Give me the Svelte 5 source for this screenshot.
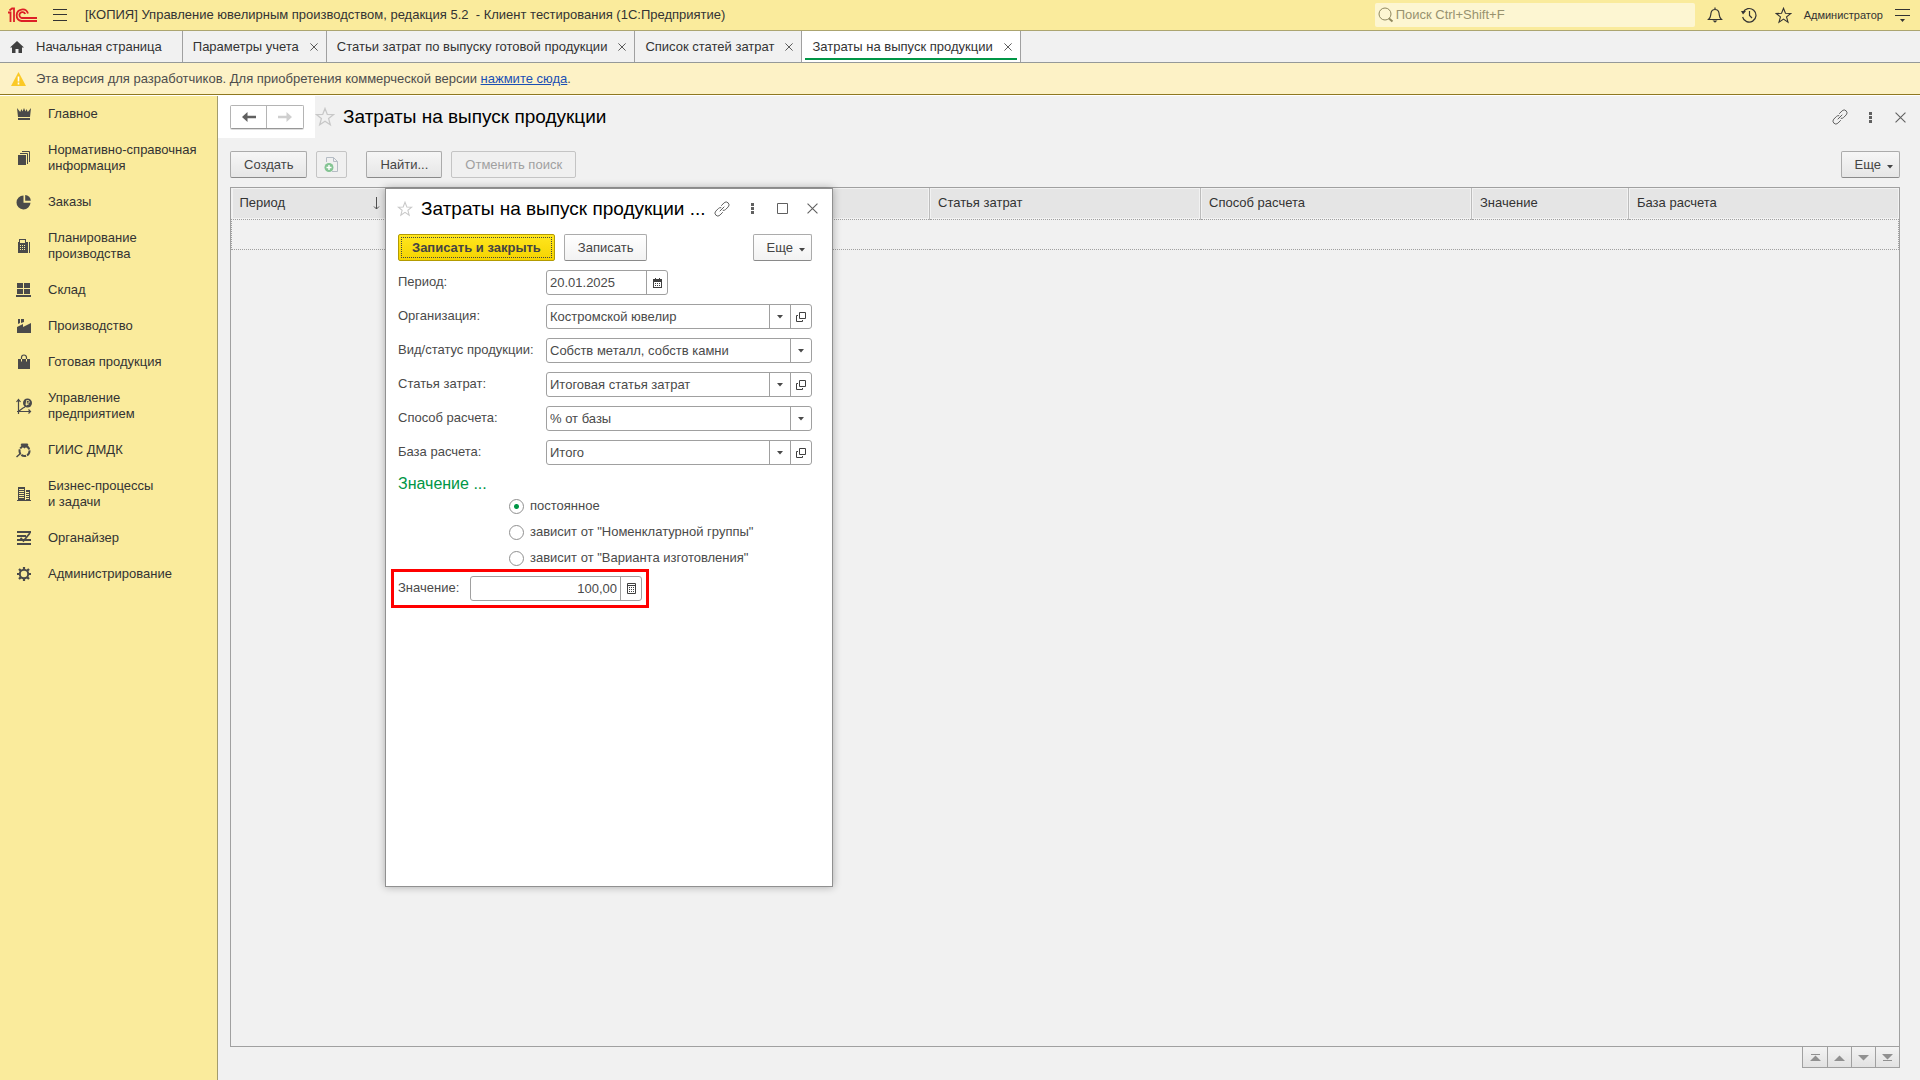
<script>
  const tabs = [
    { title: 'Параметры учета' },
    { title: 'Статьи затрат по выпуску готовой продукции' },
    { title: 'Список статей затрат' },
    { title: 'Затраты на выпуск продукции', active: true }
  ];

  const sections = [
    { icon: 'crown', lines: ['Главное'] },
    { icon: 'docs', lines: ['Нормативно-справочная', 'информация'] },
    { icon: 'pie', lines: ['Заказы'] },
    { icon: 'calc', lines: ['Планирование', 'производства'] },
    { icon: 'stock', lines: ['Склад'] },
    { icon: 'factory', lines: ['Производство'] },
    { icon: 'bag', lines: ['Готовая продукция'] },
    { icon: 'chart', lines: ['Управление', 'предприятием'] },
    { icon: 'ring', lines: ['ГИИС ДМДК'] },
    { icon: 'building', lines: ['Бизнес-процессы', 'и задачи'] },
    { icon: 'organizer', lines: ['Органайзер'] },
    { icon: 'gear', lines: ['Администрирование'] }
  ];

  const columns = ['Статья затрат', 'Способ расчета', 'Значение', 'База расчета'];

  const fields = [
    { id: 'org', label: 'Организация:', value: 'Костромской ювелир', open: true },
    { id: 'kind', label: 'Вид/статус продукции:', value: 'Собств металл, собств камни' },
    { id: 'item', label: 'Статья затрат:', value: 'Итоговая статья затрат', open: true },
    { id: 'method', label: 'Способ расчета:', value: '% от базы' },
    { id: 'base', label: 'База расчета:', value: 'Итого', open: true }
  ];

  const modes = ['постоянное', 'зависит от "Номенклатурной группы"', 'зависит от "Варианта изготовления"'];

  let mode = $state('постоянное');
  let period = $state('20.01.2025');
  let amount = $state('100,00');
</script>

{#snippet star(size)}
  <svg width={size} height={size} viewBox="0 0 20 20" fill="none" stroke="currentColor" stroke-width="1.3">
    <path d="M10 1.5l2.3 5.9 6.2.3-4.9 3.9 1.7 6.2-5.3-3.5-5.3 3.5 1.7-6.2L1.5 7.7l6.2-.3z" />
  </svg>
{/snippet}

{#snippet link()}
  <svg width="16" height="16" viewBox="0 0 16 16" fill="none" stroke="currentColor" stroke-linecap="round">
    <path d="M7.5 4.5l2.600-2.700a2.900 2.900 0 0 1 4.100 4.100l-2.700 2.700a2.900 2.900 0 0 1-2.300.8" />
    <path d="M8.5 11.5l-2.600 2.700a2.900 2.900 0 0 1-4.100-4.100l2.700-2.700a2.900 2.900 0 0 1 2.300-.8" />
    <path d="M6 10l4-4" />
  </svg>
{/snippet}

{#snippet dots()}
  <svg width="3" height="11" viewBox="0 0 3 11" fill="currentColor">
    <path d="M0 0h3v3H0zM0 4h3v3H0zM0 8h3v3H0z" />
  </svg>
{/snippet}

{#snippet cross(size)}
  <svg width={size} height={size} viewBox="0 0 10 10" fill="none" stroke="currentColor">
    <path d="M.5.5l9 9M9.5.5l-9 9" />
  </svg>
{/snippet}

{#snippet arrow()}
  <svg class="arrow" width="6" height="4" viewBox="0 0 6 4" fill="currentColor"><path d="M0 0h6L3 3.500z" /></svg>
{/snippet}

{#snippet sectionIcon(name)}
  <svg width="16" height="16" viewBox="0 0 16 16" fill="#4a4a4a">
    {#if name === 'crown'}
      <path d="M1 2l3.200 4L5.500 3 6.500 5.500 8 2l1.500 3.500 1-2.500L11.800 6 15 2l-1 9H2zM2 12h12v2H2z" />
    {:else if name === 'docs'}
      <path d="M2 5h8v10H2z" />
      <path d="M4 3.500h7.500V14M6 1.500h7.500V12" fill="none" stroke="#4a4a4a" />
    {:else if name === 'pie'}
      <path d="M7.500 1.500v7.300h7A7 7 0 1 1 7.500 1.500z" />
      <path d="M9.200 1a6 6 0 0 1 5.600 5.800H9.200z" />
    {:else if name === 'calc'}
      <path fill-rule="evenodd" d="M3 1h7v3h2v11H2V4h1zm1 1v3h5V2zM4 7v1h1V7zm2 0v1h1V7zm2 0v1h1V7zM4 9v1h1V9zm2 0v1h1V9zm2 0v1h1V9zm-4 2v1h1v-1zm2 0v1h1v-1zm2 0v1h1v-1z" />
      <path d="M13 4h1v11h-1z" />
    {:else if name === 'stock'}
      <path d="M1 1h6v5H1zM8 1h6v5H8zM1 7h6v5H1zM8 7h6v5H8zM0 13h15v2H0z" />
    {:else if name === 'factory'}
      <path d="M1 15V9l6-3v3l8-4v10zM2 1h2v4l-2 1zM5 1h3v3L5 5z" />
    {:else if name === 'bag'}
      <path d="M2 5h12v10H2z" />
      <path d="M5.500 7V3.500a2.500 2.500 0 0 1 5 0V7" fill="none" stroke="#4a4a4a" stroke-width="1.2" />
      <path d="M5.500 5v2.500M10.500 5v2.500" stroke="#faeb9c" />
    {:else if name === 'chart'}
      <path d="M2.500 16V2M1 13.500h13M.5 4l2-2.500 2 2.500M12.500 11.500l2 2-2 2M3 13l4-3 2-1" fill="none" stroke="#4a4a4a" stroke-width="1.2" />
      <circle cx="11.5" cy="5" r="4.5" />
      <path d="M10.500 7.500v-5h1.500a1.300 1.300 0 0 1 0 2.700H9.500M9.500 6.500h3" fill="none" stroke="#faeb9c" stroke-width=".8" />
    {:else if name === 'ring'}
      <circle cx="8.5" cy="9" r="5" fill="none" stroke="#4a4a4a" stroke-width="2" stroke-dasharray="5 1" />
      <path d="M5.500 1.500h6l1 1.500-4 3.500L4.500 3zM0 14.500l4-3.500 1 1-4 3.500z" />
    {:else if name === 'building'}
      <path d="M2 1h7v14H2zM10 4h4v11h-4zM1 14h14v1H1z" />
      <path d="M3 3.500h5M3 5.500h5M3 7.500h5M3 9.500h5M3 11.500h5M10 6.500h3M10 8.500h3M10 10.500h3M10 12.500h3" stroke="#faeb9c" />
    {:else if name === 'organizer'}
      <path d="M1 1h14v2H1zM1 5h9v2H1zM1 9h14v2H1zM1 13h14v2H1z" />
      <path d="M4.500 8l3 3L14 3" fill="none" stroke="#4a4a4a" stroke-width="1.8" />
    {:else}
      <circle cx="8" cy="8" r="4.2" fill="none" stroke="#4a4a4a" stroke-width="2" />
      <path d="M8 1v2.500M8 12.500V15M1 8h2.500M12.500 8H15M3 3l1.900 1.900M11.100 11.100L13 13M13 3l-1.900 1.900M4.900 11.100L3 13" stroke="#4a4a4a" stroke-width="2.2" />
    {/if}
  </svg>
{/snippet}

<div class="app">
  <header class="titlebar">
    <svg class="logo" width="30" height="16" viewBox="0 0 30 16" fill="none" stroke="#dd1f26" stroke-width="1.8">
      <path d="M0 5.500h2.500V15M1.500 3.500L4 1.500h2V15" />
      <path d="M20 6.500a5.800 5.800 0 1 0-6.500 7.500H29" />
      <path d="M17.200 7a3 3 0 1 0-3.400 4H29" />
    </svg>
    <button class="plain menu" aria-label="Меню">
      <svg width="14" height="12" viewBox="0 0 14 12" stroke="currentColor"><path d="M0 .5h14M0 5.500h14M0 11.500h14" /></svg>
    </button>
    <span class="app-title">[КОПИЯ] Управление ювелирным производством, редакция 5.2 &nbsp;- Клиент тестирования (1С:Предприятие)</span>
    <label class="search">
      <svg width="16" height="16" viewBox="0 0 16 16" fill="none" stroke="#8f885f">
        <circle cx="7" cy="7" r="6" />
        <path d="M11 11.500l3.500 3" stroke-width="2" />
      </svg>
      <input type="text" placeholder="Поиск Ctrl+Shift+F" aria-label="Поиск" />
    </label>
    <div class="title-tools">
      <button class="plain" aria-label="Уведомления">
        <svg width="16" height="16" viewBox="0 0 16 16" fill="none" stroke="currentColor" stroke-width="1.2">
          <path d="M1.500 12.500h13c-2.500-2-2-3.500-2.500-6.500-.4-2.400-1.500-3.500-4-3.500S4.400 3.600 4 6c-.5 3 0 4.500-2.500 6.500zM8 .5v2" />
          <path d="M5.500 13.500h5L8 15.800z" fill="currentColor" stroke="none" />
        </svg>
      </button>
      <button class="plain" aria-label="История">
        <svg width="16" height="16" viewBox="0 0 16 16" fill="none" stroke="currentColor" stroke-width="1.2">
          <path d="M2 5.500a6.800 6.800 0 1 1-.4 4.500M8.500 4v4.500l2.500 2.500" />
          <path d="M0 4h5L2 7.500z" fill="currentColor" stroke="none" />
        </svg>
      </button>
      <button class="plain" aria-label="Избранное">{@render star(17)}</button>
    </div>
    <a class="user" href="#user">Администратор</a>
    <button class="plain" aria-label="Настройки">
      <svg width="15" height="13" viewBox="0 0 15 13" stroke="currentColor">
        <path d="M0 .5h15M0 6.500h15" />
        <path d="M5 10h5l-2.500 3z" fill="currentColor" stroke="none" />
      </svg>
    </button>
  </header>

  <nav class="tabs">
    <a class="tab home" href="#home">
      <svg width="14" height="12" viewBox="0 0 14 12" fill="#404040"><path d="M7 0l7 6.500h-2V12H8.500V8h-3v4H2V6.500H0z" /></svg>
      Начальная страница
    </a>
    {#each tabs as tab}
      <div class="tab" class:active={tab.active}>
        <a href="#tab">{tab.title}</a>
        <button class="plain" aria-label="Закрыть">{@render cross(8)}</button>
      </div>
    {/each}
  </nav>

  <div class="notice">
    <svg width="15" height="14" viewBox="0 0 15 14">
      <path d="M7.500 0L15 14H0z" fill="#fbc926" />
      <path d="M7.500 4.500v5M7.500 10.500v2" stroke="#fff" stroke-width="1.6" />
    </svg>
    <span>Эта версия для разработчиков. Для приобретения коммерческой версии <a href="#buy">нажмите сюда</a>.</span>
  </div>

  <div class="body">
    <aside class="sidebar">
      {#each sections as section}
        <a class="section" href="#section">
          {@render sectionIcon(section.icon)}
          <span>
            {#each section.lines as line}<span class="line">{line}</span>{/each}
          </span>
        </a>
      {/each}
    </aside>

    <main class="page">
      <div class="page-head">
        <div class="nav-box">
          <div class="nav-buttons">
            <button aria-label="Назад">
              <svg width="14" height="10" viewBox="0 0 14 10" fill="#606060"><path d="M0 5l5.500-5v3.700H14v2.600H5.500V10z" /></svg>
            </button>
            <button aria-label="Вперед" disabled>
              <svg width="14" height="10" viewBox="0 0 14 10" fill="#cfcfcf"><path d="M14 5L8.500 0v3.700H0v2.600h8.500V10z" /></svg>
            </button>
          </div>
        </div>
        <button class="plain fav" aria-label="В избранное">{@render star(20)}</button>
        <h1>Затраты на выпуск продукции</h1>
        <div class="window-tools">
          <button class="plain" aria-label="Ссылка">{@render link()}</button>
          <button class="plain" aria-label="Действия">{@render dots()}</button>
          <button class="plain" aria-label="Закрыть">{@render cross(11)}</button>
        </div>
      </div>

      <div class="toolbar">
        <button class="btn">Создать</button>
        <button class="btn copy" aria-label="Скопировать" disabled>
          <svg width="15" height="17" viewBox="0 0 15 17" fill="none">
            <path d="M2.500 6V1.500h7l4 4v10H8M9.500 1.500v4h4" stroke="#b5bcc4" />
            <circle cx="5" cy="11.5" r="4.5" fill="#84c493" />
            <path d="M5 9v5M2.500 11.500h5" stroke="#fff" stroke-width="1.4" />
          </svg>
        </button>
        <button class="btn find">Найти...</button>
        <button class="btn" disabled>Отменить поиск</button>
        <button class="btn more">Еще {@render arrow()}</button>
      </div>

      <div class="list">
        <table>
          <colgroup>
            <col class="c-period" /><col class="c-hidden" /><col class="c-item" /><col class="c-method" /><col class="c-value" /><col />
          </colgroup>
          <thead>
            <tr>
              <th>
                <span class="sorted">Период
                  <svg width="7" height="13" viewBox="0 0 7 13" fill="none" stroke="#505050"><path d="M3.500 0v12M1 9.500l2.500 2.500L6 9.500" /></svg>
                </span>
              </th>
              <th aria-label="Организация"></th>
              {#each columns as column}<th>{column}</th>{/each}
            </tr>
          </thead>
          <tbody>
            <tr><td colspan="6"></td></tr>
          </tbody>
        </table>
      </div>

      <div class="pager">
        <button aria-label="В начало"><svg width="11" height="7" viewBox="0 0 11 7"><path d="M1 0h9v1H1zM5.500 1.500L11 7H0z" /></svg></button>
        <button aria-label="Вверх"><svg width="11" height="7" viewBox="0 0 11 7"><path d="M5.500 1.500L11 7H0z" /></svg></button>
        <button aria-label="Вниз"><svg width="11" height="7" viewBox="0 0 11 7"><path d="M0 1h11L5.500 6.500z" /></svg></button>
        <button aria-label="В конец"><svg width="11" height="7" viewBox="0 0 11 7"><path d="M0 0h11L5.500 5.500zM1 6h9v1H1z" /></svg></button>
      </div>

      <div class="dialog" role="dialog" aria-labelledby="dialog-title">
        <div class="dialog-head">
          <button class="plain fav" aria-label="В избранное">{@render star(16)}</button>
          <h2 id="dialog-title">Затраты на выпуск продукции ...</h2>
          <div class="window-tools">
            <button class="plain" aria-label="Ссылка">{@render link()}</button>
            <button class="plain" aria-label="Действия">{@render dots()}</button>
            <button class="plain" aria-label="Развернуть">
              <svg width="11" height="11" viewBox="0 0 11 11" fill="none" stroke="currentColor"><path d="M.5.5h10v10H.5z" /></svg>
            </button>
            <button class="plain" aria-label="Закрыть">{@render cross(11)}</button>
          </div>
        </div>

        <div class="dialog-bar">
          <button class="btn primary">Записать и закрыть</button>
          <button class="btn">Записать</button>
          <button class="btn more">Еще {@render arrow()}</button>
        </div>

        <div class="form">
          <div class="row">
            <label for="period">Период:</label>
            <div class="field date">
              <input id="period" type="text" bind:value={period} />
              <button aria-label="Выбрать дату">
                <svg width="9" height="10" viewBox="0 0 9 10" fill="#404040">
                  <path fill-rule="evenodd" d="M0 1h2V0h1v1h3V0h1v1h2v9H0zm1 3v5h7V4z" />
                  <path d="M2 5h1v1H2zM4 5h1v1H4zM6 5h1v1H6zM2 7h1v1H2zM4 7h1v1H4zM6 7h1v1H6z" />
                </svg>
              </button>
            </div>
          </div>

          {#each fields as field}
            <div class="row">
              <label for={field.id}>{field.label}</label>
              <div class="field">
                <div class="picker">
                  <select id={field.id}><option>{field.value}</option></select>
                  <span class="drop">{@render arrow()}</span>
                </div>
                {#if field.open}
                  <button aria-label="Открыть">
                    <svg width="10" height="10" viewBox="0 0 10 10" fill="none" stroke="#404040"><path d="M3.500.5h6v6h-6zM2 3.500H.5v6h6V8" /></svg>
                  </button>
                {/if}
              </div>
            </div>
          {/each}
        </div>

        <fieldset>
          <legend>Значение ...</legend>
          {#each modes as item}
            <label class="radio">
              <input type="radio" name="mode" value={item} bind:group={mode} />
              {item}
            </label>
          {/each}
        </fieldset>

        <div class="amount">
          <label for="amount">Значение:</label>
          <div class="field">
            <input id="amount" type="text" bind:value={amount} />
            <button aria-label="Калькулятор">
              <svg width="9" height="11" viewBox="0 0 9 11" fill="none" stroke="#404040">
                <path d="M.5.5h8v10h-8zM1 2.500h7" />
                <path d="M2 4.500h5M2 6.500h5M2 8.500h5" stroke-dasharray="1 1" />
              </svg>
            </button>
          </div>
        </div>
      </div>
    </main>
  </div>
</div>

<style>
  :global(body) {
    margin: 0;
  }

  .app {
    display: flex;
    flex-direction: column;
    min-height: 100vh;
    background: #f1f1f1;
    color: #333;
    font: 13px/16px "Liberation Sans", Arial, sans-serif;
  }

  .app * {
    box-sizing: border-box;
  }

  svg {
    display: block;
    flex: none;
  }

  button,
  input,
  select {
    font: inherit;
    color: inherit;
    margin: 0;
  }

  a {
    color: inherit;
    text-decoration: none;
  }

  .plain {
    display: flex;
    align-items: center;
    justify-content: center;
    padding: 0;
    border: 0;
    background: none;
  }

  /* Title bar */
  .titlebar {
    display: flex;
    align-items: center;
    height: 31px;
    padding: 0 10px 0 8px;
    background: #faeb9c;
    border-bottom: 1px solid #aca570;
  }

  .menu {
    margin: 0 18px 0 15px;
  }

  .app-title {
    flex: 1;
  }

  .search {
    display: flex;
    align-items: center;
    width: 320px;
    height: 24px;
    padding-left: 3px;
    background: #fdf6d2;
    border-radius: 2px;
  }

  .search input {
    flex: 1;
    padding: 0 2px;
    border: 0;
    background: none;
    outline: none;
  }

  .search input::placeholder {
    color: #98926f;
    opacity: 1;
  }

  .title-tools {
    display: flex;
    gap: 18px;
    margin: 0 12px;
  }

  .user {
    margin-right: 12px;
    font-size: 11px;
  }

  /* Open windows */
  .tabs {
    display: flex;
    height: 32px;
    border-bottom: 1px solid #959999;
  }

  .tab {
    display: flex;
    align-items: center;
    gap: 11px;
    padding: 0 8px 0 10px;
    border-right: 1px solid #a0a0a0;
  }

  .home {
    gap: 12px;
    padding: 0 20px 0 10px;
  }

  .active {
    background: linear-gradient(#009646, #009646) center 27px / calc(100% - 6px) 2px no-repeat #fff;
  }

  .notice {
    display: flex;
    align-items: center;
    gap: 10px;
    height: 32px;
    padding: 0 11px;
    background: #fdf2c6;
    border-bottom: 1px solid #8f7820;
    color: #4d4d4d;
  }

  .notice a {
    color: #1a4fb4;
    text-decoration: underline;
  }

  .body {
    flex: 1;
    display: flex;
    border-top: 1px solid #fff;
  }

  /* Sections */
  .sidebar {
    width: 218px;
    flex: none;
    background: #faeb9c;
    border-right: 1px solid #a39c6c;
  }

  .section {
    display: flex;
    align-items: center;
    gap: 16px;
    padding: 10px 16px;
  }

  .line {
    display: block;
    white-space: nowrap;
  }

  /* Page */
  .page {
    position: relative;
    flex: 1;
    min-width: 0;
    display: flex;
    flex-direction: column;
    padding: 0 20px 12px 12px;
  }

  .page-head {
    display: flex;
    align-items: center;
    height: 42px;
  }

  .nav-box {
    align-self: stretch;
    display: flex;
    align-items: center;
    width: 97px;
    margin-left: -12px;
    padding-left: 12px;
    background: #fff;
  }

  .nav-buttons {
    display: flex;
    height: 24px;
    border: 1px solid #b4b4b4;
    border-bottom-color: #979797;
    border-radius: 2px;
    box-shadow: 0 1px 0 #ddd;
  }

  .nav-buttons button {
    display: flex;
    align-items: center;
    justify-content: center;
    width: 36px;
    padding: 0;
    border: 0;
    background: #fff;
  }

  .nav-buttons button:first-child {
    border-right: 1px solid #b4b4b4;
  }

  .fav {
    color: #c8c8c8;
  }

  h1,
  h2 {
    margin: 0 0 0 8px;
    color: #000;
    font-size: 19px;
    font-weight: normal;
    line-height: 22px;
    white-space: nowrap;
  }

  .window-tools {
    display: flex;
    margin: 0 -15px 0 auto;
    color: #606060;
  }

  .window-tools button {
    width: 30px;
    height: 22px;
  }

  .toolbar {
    display: flex;
    margin-top: 13px;
    gap: 9px;
  }

  .btn {
    display: flex;
    align-items: center;
    gap: 6px;
    height: 27px;
    padding: 0 13px;
    border: 1px solid #ababab;
    border-bottom-color: #8a8a8a;
    border-radius: 2px;
    background: linear-gradient(#f6f6f6, #e6e6e6);
    color: #444;
    white-space: nowrap;
  }

  .btn:disabled {
    background: #f0f0f0;
    border-color: #c4c4c4;
    color: #a0a0a0;
  }

  .copy {
    padding: 0 7px;
  }

  .find {
    margin-left: 10px;
  }

  .more {
    margin-left: auto;
    padding-right: 6px;
  }

  .btn .arrow {
    margin-top: 4px;
  }

  /* List */
  .list {
    flex: 1;
    margin-top: 9px;
    border: 1px solid #a0a0a0;
  }

  table {
    width: 100%;
    table-layout: fixed;
    border-collapse: collapse;
  }

  .c-period {
    width: 155px;
  }

  .c-hidden {
    width: 543px;
  }

  .c-item,
  .c-method {
    width: 271px;
  }

  .c-value {
    width: 157px;
  }

  th {
    height: 31px;
    padding: 0 6px 0 8px;
    background: #e5e5e5;
    border-right: 1px solid #bcbcbc;
    box-shadow: inset 0 0 0 1px #f2f2f2;
    font-weight: normal;
    text-align: left;
  }

  th:last-child {
    border-right: 0;
  }

  .sorted {
    display: flex;
    align-items: center;
    justify-content: space-between;
  }

  td {
    height: 30px;
    padding: 0;
    border: 1px dotted #a0a0a0;
  }

  .pager {
    display: flex;
    align-self: flex-end;
    height: 21px;
    border: solid #a0a0a0;
    border-width: 0 1px 1px;
  }

  .pager button {
    display: flex;
    align-items: center;
    justify-content: center;
    width: 24px;
    padding: 0;
    border: 0;
    background: linear-gradient(#f3f3f3, #e2e2e2);
    fill: #909090;
  }

  .pager button + button {
    border-left: 1px solid #a0a0a0;
  }

  /* Floating form */
  .dialog {
    position: absolute;
    top: 92px;
    left: 167px;
    width: 448px;
    height: 699px;
    padding: 0 20px 0 12px;
    background: #fff;
    border: 1px solid #909090;
    box-shadow: 0 0 8px rgba(0, 0, 0, 0.3);
    color: #4a4a4a;
  }

  .dialog-head {
    display: flex;
    align-items: center;
    height: 39px;
    margin-left: -1px;
  }

  .dialog-bar {
    display: flex;
    gap: 9px;
    margin: 6px 0 9px;
  }

  .dialog .btn {
    background: linear-gradient(#fff, #f2f2f2);
  }

  .dialog .primary {
    background: linear-gradient(#ffe61f, #f5d400);
    border-color: #b39b00;
    outline: 1px dotted #444;
    outline-offset: -4px;
    font-weight: bold;
  }

  .form {
    display: flex;
    flex-direction: column;
    gap: 9px;
  }

  .row {
    display: flex;
  }

  .row > label {
    width: 148px;
    padding-top: 4px;
  }

  .field {
    flex: 1;
    min-width: 0;
    display: flex;
    height: 25px;
    border: 1px solid #a0a0a0;
    border-radius: 3px;
    background: #fff;
  }

  .date {
    flex: none;
    width: 122px;
  }

  .field input {
    flex: 1;
    min-width: 0;
    padding: 0 3px;
    border: 0;
    background: none;
    outline: none;
  }

  .field button {
    display: flex;
    align-items: center;
    justify-content: center;
    width: 21px;
    padding: 0;
    border: 0;
    border-left: 1px solid #a0a0a0;
    background: none;
  }

  .picker {
    flex: 1;
    display: grid;
    grid-template-columns: 1fr 21px;
  }

  .picker select {
    grid-area: 1 / 1 / 2 / 3;
    padding: 0 24px 0 3px;
    border: 0;
    background: none;
    appearance: none;
    outline: none;
  }

  .drop {
    grid-area: 1 / 2;
    display: flex;
    align-items: center;
    justify-content: center;
    border-left: 1px solid #a0a0a0;
    pointer-events: none;
  }

  fieldset {
    margin: 9px 0 0;
    padding: 0 0 0 111px;
    border: 0;
  }

  legend {
    margin-left: -111px;
    padding: 0;
    color: #009646;
    font-size: 16px;
    line-height: 19px;
  }

  .radio {
    display: flex;
    align-items: center;
    gap: 6px;
    height: 26px;
  }

  .radio input {
    width: 15px;
    height: 15px;
    border: 1px solid #909090;
    border-radius: 50%;
    appearance: none;
  }

  .radio input:checked {
    background: radial-gradient(circle, #009646 2px, #fff 3px);
  }

  /* Highlighted value */
  .amount {
    display: flex;
    width: 258px;
    margin: -2px 0 0 -7px;
    padding: 4px;
    border: 3px solid #f00;
  }

  .amount label {
    flex: none;
    width: 72px;
    padding-top: 4px;
  }

  .amount input {
    text-align: right;
  }
</style>
